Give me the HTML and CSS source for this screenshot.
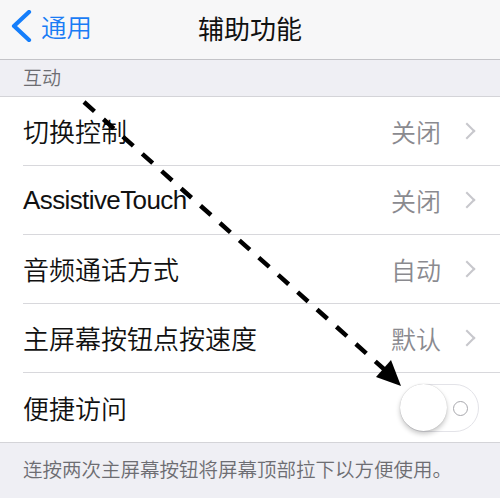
FILE: index.html
```html
<!DOCTYPE html>
<html lang="zh-CN">
<head>
  <meta charset="UTF-8">
  <title>辅助功能</title>
  <link rel="stylesheet" href="styles.css">
</head>
<body>
  <div class="screen">
    <div class="navbar">
      <div class="back">
        <svg class="back-icon" width="24" height="32" viewBox="0 0 24 32">
          <path d="M20 2 L5 16 L20 30" fill="none" stroke="#157efb" stroke-width="4.2" stroke-linecap="round" stroke-linejoin="round"/>
        </svg>
        <span>通用</span>
      </div>
      <div class="title">辅助功能</div>
    </div>

    <div class="section-head">互动</div>

    <ul class="list">
      <li class="item">
        <span class="label">切换控制</span>
        <span class="value">关闭</span>
        <span class="chev"></span>
      </li>
      <li class="item">
        <span class="label latin">AssistiveTouch</span>
        <span class="value">关闭</span>
        <span class="chev"></span>
      </li>
      <li class="item">
        <span class="label">音频通话方式</span>
        <span class="value">自动</span>
        <span class="chev"></span>
      </li>
      <li class="item">
        <span class="label">主屏幕按钮点按速度</span>
        <span class="value">默认</span>
        <span class="chev"></span>
      </li>
      <li class="item last">
        <span class="label">便捷访问</span>
        <div class="switch">
          <div class="knob"></div>
          <div class="off-mark"></div>
        </div>
      </li>
    </ul>

    <div class="footnote">连按两次主屏幕按钮将屏幕顶部拉下以方便使用。</div>

    <!-- hand-drawn dashed arrow pointing at the switch -->
    <svg class="arrow" width="500" height="498" viewBox="0 0 500 498">
      <line x1="84" y1="102" x2="385" y2="370" stroke="#000" stroke-width="4.5" stroke-dasharray="14 12"/>
      <polygon points="401,386 376,377 391,360" fill="#000"/>
    </svg>
  </div>
</body>
</html>
```

FILE: styles.css
```css
* { box-sizing: border-box; margin: 0; padding: 0; }
body { width: 500px; height: 498px; overflow: hidden; background: #efeff4; font-family: "Noto Sans CJK SC", "Liberation Sans", sans-serif; }
.screen { position: relative; width: 500px; height: 498px; }

.navbar { position: relative; height: 60px; background: #f7f7f8; border-bottom: 1px solid #c4c4c8; display: flex; align-items: center; justify-content: center; }
.back { position: absolute; left: 9px; top: 10px; display: flex; align-items: center; gap: 8px; color: #1a7cf5; font-size: 25.5px; line-height: 32px; font-weight: 350; }
.back-icon { display: block; }
.title { font-size: 26px; font-weight: 400; color: #111; line-height: 30px; margin-top: -4px; }

.section-head { height: 36px; padding: 4px 0 0 23px; font-size: 19px; line-height: 26px; color: #6d6d72; font-weight: 350; }

.list { list-style: none; background: #fff; border-top: 1px solid #d4d4d8; border-bottom: 1px solid #d4d4d8; }
.item { height: 69px; margin-left: 23px; padding-right: 22px; display: flex; align-items: center; border-bottom: 1px solid #d8d8dc; }
.item.last { border-bottom: none; }
.label { flex: 1; font-size: 26px; line-height: 30px; color: #111; font-weight: 350; }
.label.latin { font-family: "Liberation Sans", sans-serif; font-size: 26px; font-weight: 400; letter-spacing: -0.6px; }
.value { font-size: 25px; line-height: 30px; color: #8a8a8f; margin-right: 20px; font-weight: 350; }
.chev { width: 12px; height: 12px; border-top: 2px solid #c7c7cc; border-right: 2px solid #c7c7cc; transform: rotate(45deg); margin-right: 5px; }

.switch { position: relative; width: 79px; height: 48px; border: 1.5px solid #e3e3e8; border-radius: 24px; background: #fff; display: flex; align-items: center; justify-content: flex-end; padding-right: 10px; margin-top: 1px; margin-right: -1px; }
.knob { position: absolute; left: -1px; top: -1px; width: 47px; height: 47px; border-radius: 50%; background: #fff; box-shadow: 0 3px 5px rgba(0,0,0,0.22), 0 0 1px rgba(0,0,0,0.25); }
.off-mark { width: 15px; height: 15px; border: 1.5px solid #a8a8ad; border-radius: 50%; }

.footnote { padding: 12px 0 0 23px; font-size: 19.5px; line-height: 28px; color: #6d6d72; font-weight: 350; }

.arrow { position: absolute; left: 0; top: 0; pointer-events: none; }
```
